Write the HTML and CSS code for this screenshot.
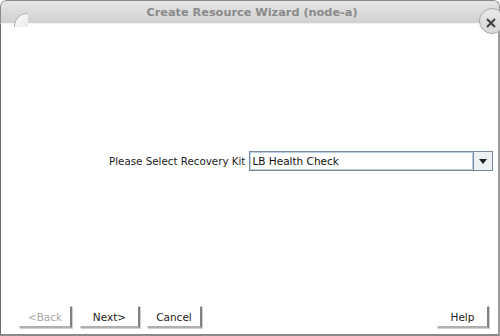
FILE: index.html
```html
<!DOCTYPE html>
<html lang="en">
<head>
    <meta charset="UTF-8">
    <title>Create Resource Wizard (node-a)</title>
    <link rel="stylesheet" href="styles.css">
</head>
<body>

<div class="window">
    <!-- title bar -->
    <div class="titlebar">
        <div class="menu-btn"></div>
        <div class="title">Create Resource Wizard (node-a)</div>
        <div class="close-btn">
            <svg width="12" height="12" viewBox="0 0 12 12">
                <path d="M2 2 L10 10 M10 2 L2 10" stroke="#444" stroke-width="2.2" fill="none"/>
            </svg>
        </div>
    </div>

    <div class="content">
        <div class="form-area">
            <div class="form-row">
                <span class="label">Please Select Recovery Kit</span>
                <div class="combo">
                    <div class="combo-text">LB Health Check</div>
                    <div class="combo-arrow"></div>
                </div>
            </div>
        </div>

        <div class="buttons">
            <button class="btn btn-back disabled">&lt;Back</button>
            <button class="btn btn-next">Next&gt;</button>
            <button class="btn btn-cancel">Cancel</button>
            <div class="spacer"></div>
            <button class="btn btn-help">Help</button>
        </div>
    </div>
</div>

</body>
</html>
```

FILE: styles.css
```css
body {
    margin: 0;
    font-family: "DejaVu Sans", sans-serif;
    background-color: #ffffff;
    overflow: hidden;
}
.window {
    width: 500px;
    height: 336px;
    box-sizing: border-box;
    display: flex;
    flex-direction: column;
    background-color: #fff;
    border-radius: 6px 6px 0 0;
    overflow: hidden;
}

/* title bar */
.titlebar {
    height: 24px;
    flex-shrink: 0;
    position: relative;
    display: flex;
    align-items: center;
    justify-content: center;
    background: linear-gradient(#e6e6e6, #d0d0d0);
    border: 1px solid #8a8a8a;
    border-bottom: 1px solid #f2f2f2;
    border-radius: 6px 6px 0 0;
    box-sizing: border-box;
}
.title {
    font-size: 11.3px;
    font-weight: bold;
    color: #8a8a8a;
    padding-left: 4px;
}
.menu-btn {
    position: absolute;
    left: 13px;
    top: 12px;
    width: 24px;
    height: 24px;
    border-radius: 50%;
    background: linear-gradient(135deg, #fafafa, #dedede);
    border: 1px solid #b0b0b0;
    clip-path: inset(0 12px 12px 0);
}
.close-btn {
    position: absolute;
    right: -6px;
    top: 7px;
    width: 24px;
    height: 24px;
    border-radius: 50%;
    border: 1px solid #a8a8a8;
    background: linear-gradient(#e8e8e8, #d8d8d8);
    display: flex;
    align-items: center;
    justify-content: center;
}
.close-btn svg {
    margin-right: 2px;
    margin-top: 4px;
}

/* content */
.content {
    flex: 1;
    display: flex;
    flex-direction: column;
    border-left: 1px solid #6e6e6e;
    border-right: 2px solid #9a9a9a;
    border-bottom: 2px solid #8a8a8a;
}
.form-area {
    flex: 1;
    padding-top: 127px;
}
.form-row {
    display: flex;
    align-items: center;
    padding-left: 108px;
}
.label {
    font-size: 10.3px;
    color: #222;
    margin-right: 4px;
    white-space: nowrap;
    flex-shrink: 0;
}
.combo {
    display: flex;
    width: 244px;
    height: 20px;
    box-sizing: border-box;
    border: 1px solid #7a8a99;
    background: #fff;
}
.combo-text {
    flex: 1;
    font-size: 10.5px;
    color: #111;
    padding-left: 1px;
    line-height: 16px;
    border: 1px solid #b8cfe5;
}
.combo-arrow {
    width: 18px;
    border-left: 1px solid #7a8a99;
    position: relative;
    background: #eef1f4;
}
.combo-arrow::after {
    content: "";
    position: absolute;
    left: 5px;
    top: 7px;
    border-left: 4px solid transparent;
    border-right: 4px solid transparent;
    border-top: 5px solid #222;
}

/* bottom buttons */
.buttons {
    display: flex;
    align-items: center;
    padding: 0 9px 6px 18px;
    gap: 7px;
}
.btn {
    height: 22px;
    padding: 0;
    font-family: "DejaVu Sans", sans-serif;
    font-size: 10.5px;
    color: #222;
    background: #fff;
    border: 1px solid #fff;
    border-right: 2px solid #808080;
    border-bottom: 2px solid #b0b0b0;
    box-shadow: 1px 1px 0 #d0d0d0;
    cursor: pointer;
}
.btn-back { width: 53px; }
.btn-next { width: 60px; margin-left: 1px; }
.btn-cancel { width: 55px; }
.btn-help { width: 52px; }
.btn.disabled {
    color: #a8a8a8;
}
.spacer {
    flex: 1;
}
```
